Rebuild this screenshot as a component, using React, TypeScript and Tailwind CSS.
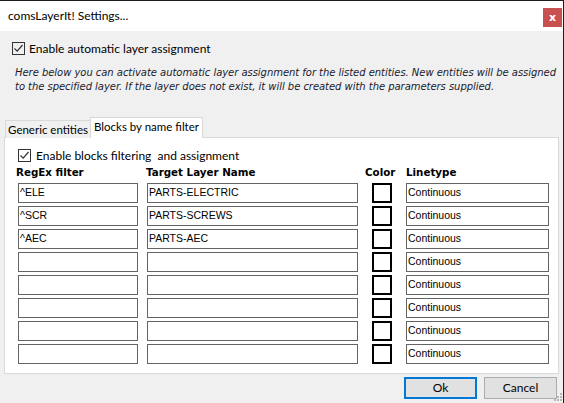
import { useState } from "react";

type Row = { regex: string; layer: string; linetype: string };

const rows: Row[] = [
  { regex: "^ELE", layer: "PARTS-ELECTRIC", linetype: "Continuous" },
  { regex: "^SCR", layer: "PARTS-SCREWS", linetype: "Continuous" },
  { regex: "^AEC", layer: "PARTS-AEC", linetype: "Continuous" },
  { regex: "", layer: "", linetype: "Continuous" },
  { regex: "", layer: "", linetype: "Continuous" },
  { regex: "", layer: "", linetype: "Continuous" },
  { regex: "", layer: "", linetype: "Continuous" },
  { regex: "", layer: "", linetype: "Continuous" },
];

function CheckBox({ checked, onToggle }: { checked: boolean; onToggle: () => void }) {
  return (
    <button
      onClick={onToggle}
      className="w-[13px] h-[13px] border border-[#333333] flex items-center justify-center shrink-0"
    >
      {checked && (
        <svg width="11" height="11" viewBox="0 0 11 11" fill="none">
          <path d="M1.5 5.5 L4.2 8.2 L9.5 2" stroke="#333333" strokeWidth="1.2" />
        </svg>
      )}
    </button>
  );
}

export default function App() {
  const [autoAssign, setAutoAssign] = useState(true);
  const [blockFilter, setBlockFilter] = useState(true);
  const [tab, setTab] = useState(1);

  return (
    <div className="relative w-[564px] h-[403px] overflow-hidden bg-[#f0f0f0] border-t border-r border-[#1e1e1e] flex flex-col font-['Lato',sans-serif] text-[12px] text-black">
      {/* title bar */}
      <div className="h-[30px] bg-white flex items-center justify-between pl-[8px] pr-[1px] shrink-0">
        <span className="text-[12px] leading-none">comsLayerIt! Settings...</span>
        <button className="w-[19px] h-[19px] mt-[3px] bg-[#c75050] text-white font-bold text-[11px] leading-none flex items-center justify-center font-['DejaVu_Sans',sans-serif]">
          x
        </button>
      </div>

      {/* main checkbox */}
      <div className="flex items-center gap-[4px] ml-[12px] mt-[11px] h-[13px]">
        <CheckBox checked={autoAssign} onToggle={() => setAutoAssign(!autoAssign)} />
        <span className="text-[12px] leading-none">Enable automatic layer assignment</span>
      </div>

      <p className="ml-[15px] mt-[11px] text-[10px] leading-[14px] italic tracking-[-0.04px] text-[#1a1a2e] font-['DejaVu_Sans',sans-serif] whitespace-nowrap">
        Here below you can activate automatic layer assignment for the listed entities. New entities will be assigned
        <br />
        to the specified layer. If the layer does not exist, it will be created with the parameters supplied.
      </p>

      {/* tabs */}
      <div className="flex items-end ml-[5px] mt-[23px] h-[21px] relative z-10 whitespace-nowrap">
        <button
          onClick={() => setTab(0)}
          className={
            tab === 0
              ? "h-[21px] w-[85px] bg-white border border-b-0 border-[#d9d9d9] text-[11.5px] leading-none pb-[2px]"
              : "h-[18px] w-[85px] bg-[#f0f0f0] border border-b-0 border-r-0 border-[#d9d9d9] text-[11.5px] leading-none"
          }
        >
          Generic entities
        </button>
        <button
          onClick={() => setTab(1)}
          className={
            tab === 1
              ? "h-[21px] w-[113px] bg-white border border-b-0 border-[#d9d9d9] text-[11.5px] leading-none pb-[2px]"
              : "h-[18px] w-[113px] bg-[#f0f0f0] border border-b-0 border-[#d9d9d9] text-[11.5px] leading-none"
          }
        >
          Blocks by name filter
        </button>
      </div>

      {/* tab panel */}
      <div className="ml-[4px] w-[555px] h-[237px] bg-white border border-[#d9d9d9] -mt-px flex flex-col">
        <div className="flex items-center gap-[5px] ml-[13px] mt-[11px] h-[13px]">
          <CheckBox checked={blockFilter} onToggle={() => setBlockFilter(!blockFilter)} />
          <span className="text-[12px] leading-none whitespace-pre">Enable blocks filtering  and assignment</span>
        </div>

        <div className="flex items-center mt-[3px] h-[14px] font-['DejaVu_Sans',sans-serif] font-bold text-[10.3px] leading-none">
          <span className="ml-[11px] w-[130px]">RegEx filter</span>
          <span className="w-[219px]">Target Layer Name</span>
          <span className="w-[41px]">Color</span>
          <span>Linetype</span>
        </div>

        <div className="flex flex-col gap-[3px] mt-[4px] ml-[13px]">
          {rows.map((r, i) => (
            <div key={i} className="flex items-center h-[20px]">
              <div className="w-[120px] h-[20px] border border-[#646464] bg-white px-[1px] flex items-center font-['Liberation_Sans',sans-serif] text-[10.5px]">
                {r.regex}
              </div>
              <div className="w-[211px] h-[20px] ml-[9px] border border-[#646464] bg-white px-[1px] flex items-center font-['Liberation_Sans',sans-serif] text-[10.5px]">
                {r.layer}
              </div>
              <div className="w-[20px] h-[20px] ml-[14px] border-2 border-black bg-white" />
              <div className="w-[143px] h-[20px] ml-[14px] border border-[#646464] bg-white px-[1px] flex items-center font-['Liberation_Sans',sans-serif] text-[10.5px]">
                {r.linetype}
              </div>
            </div>
          ))}
        </div>
      </div>

      {/* buttons */}
      <div className="flex justify-end gap-[7px] mt-[3px] pr-[6px]">
        <button className="w-[73px] h-[22px] bg-[#e1e1e1] border-2 border-[#0078d7] text-[12px] leading-none">
          Ok
        </button>
        <button className="w-[73px] h-[22px] bg-[#e1e1e1] border border-[#adadad] text-[12px] leading-none">
          Cancel
        </button>
      </div>

      {/* resize grip */}
      <svg className="absolute right-[1px] bottom-[2px]" width="9" height="9" viewBox="0 0 9 9">
        <rect x="7" y="1" width="2" height="2" fill="#b8b8b8" />
        <rect x="4" y="4" width="2" height="2" fill="#b8b8b8" />
        <rect x="7" y="4" width="2" height="2" fill="#b8b8b8" />
        <rect x="1" y="7" width="2" height="2" fill="#b8b8b8" />
        <rect x="4" y="7" width="2" height="2" fill="#b8b8b8" />
        <rect x="7" y="7" width="2" height="2" fill="#b8b8b8" />
      </svg>
    </div>
  );
}
